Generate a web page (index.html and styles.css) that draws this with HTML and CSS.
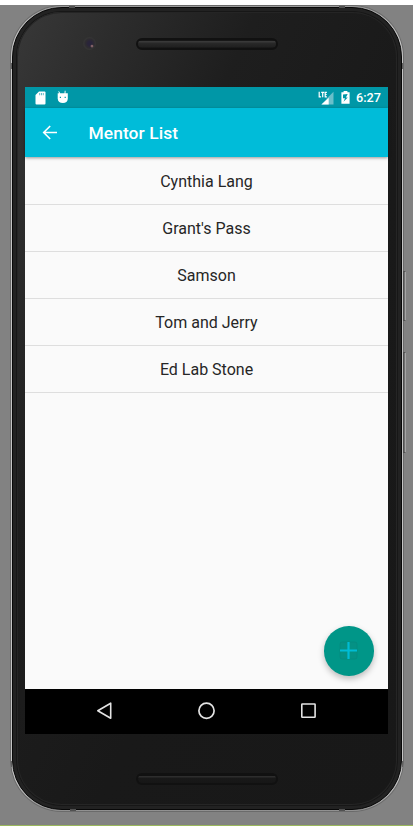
FILE: index.html
```html
<!DOCTYPE html>
<html lang="en">
<head>
<meta charset="utf-8">
<title>Mentor List</title>
<link rel="stylesheet" href="styles.css">
</head>
<body>
<div class="stage">
  <div class="phone">
    <i class="key power"></i><i class="key volume"></i>
    <i class="mark top-left"></i><i class="mark top-right"></i><i class="mark bottom-left"></i><i class="mark bottom-right"></i>
    <i class="side-mark left-top"></i><i class="side-mark right-top"></i><i class="side-mark left-bottom"></i><i class="side-mark right-bottom"></i>
    <div class="body">
      <div class="face">
        <div class="bezel top"><i class="camera"></i><i class="speaker"></i></div>
        <main class="screen">
          <div class="status">
            <div class="status-group left">
              <svg width="11" height="14" viewBox="0 0 11 14"><path fill="#fff" fill-rule="evenodd" d="M4 .5h5.500q1 0 1 1v11q0 1-1 1h-8q-1 0-1-1V4z"/><path fill="#63bcc6" d="M4.200 2v2.200h1V2zM6 2v2.200h1V2zM7.800 2v2.200h1V2z"/></svg>
              <svg class="droid" width="12" height="14" viewBox="0 0 12 14"><path fill="#fff" fill-rule="evenodd" d="M2 1.300 3.200 3.300h4.300L7.700.7l.9.100-.1 2.500h2.300v5.400q-.4 4.300-4.900 4.400-4.700-.1-5.200-4.400V3.300h1.500L1.200 1.500zM2.800 6.800v1.200H4V6.800zM7.600 6.800v1.200h1.200V6.800z"/></svg>
            </div>
            <div class="status-group">
              <svg width="16" height="14" viewBox="0 0 16 14"><path fill="#69bfca" d="M15.500.8v12.700H3.200l5.300-5.300V7.800z"/><path fill="#fff" d="M10.700 6.800v6.700H3.500z"/><path fill="none" stroke="#fff" stroke-width="1.200" d="M1.200.8v5h1.900M3.200 1.300h3M4.700 1v5.300M8.900 1.300H7.200v4.500h1.700M7.200 3.500h1.500"/></svg>
              <svg class="battery" width="9" height="13" viewBox="0 0 9 13"><path fill="#fff" d="M2.600 0h3.800v1.200h2.200v11.500H.4V1.200h2.200z"/><path fill="#0097a7" d="M6.700 3 2 3.500v3.800h2L2.500 10.800l4.300-4.400H4.900z"/></svg>
              <span class="clock">6:27</span>
            </div>
          </div>
          <header class="appbar">
            <svg width="16" height="16" viewBox="0 0 16 16"><path fill="none" stroke="#fff" stroke-width="1.600" d="M15 7.500H2M8.200 1 1.700 7.500l6.500 6.500"/></svg>
            <h1>Mentor List</h1>
          </header>
          <ul class="list">
            <li>Cynthia Lang</li>
            <li>Grant's Pass</li>
            <li>Samson</li>
            <li>Tom and Jerry</li>
            <li>Ed Lab Stone</li>
          </ul>
          <button class="fab" aria-label="Add"><svg width="19" height="19" viewBox="0 0 19 19"><rect x="1" y="1" width="17" height="17" rx="2" fill="#059184" stroke="#058a7e" stroke-width=".7"/><path fill="none" stroke="#00bcd4" stroke-width="2.200" d="M9.500 1v17M1 9.500h17"/></svg></button>
          <nav class="nav">
            <svg width="18" height="18" viewBox="0 0 18 18"><path fill="none" stroke="#e3e3e3" stroke-width="1.600" stroke-linejoin="round" d="M14.700 1.200v15L1.800 8.700z"/></svg>
            <svg width="18" height="18" viewBox="0 0 18 18"><circle cx="8.500" cy="8.700" r="7.600" fill="none" stroke="#e3e3e3" stroke-width="1.700"/></svg>
            <svg width="18" height="18" viewBox="0 0 18 18"><rect x="1.800" y="2" width="13.300" height="13.300" rx=".5" fill="none" stroke="#e3e3e3" stroke-width="1.600"/></svg>
          </nav>
        </main>
        <div class="bezel bottom"><i class="speaker"></i></div>
      </div>
    </div>
  </div>
</div>
</body>
</html>
```
FILE: styles.css
```css
* { box-sizing: border-box; }
body { display: flow-root; margin: 0; background: #fff; font-family: Roboto, sans-serif; }
svg { display: block; flex: none; }

.stage {
  height: 821px;
  margin-top: 5px;
  padding: 1px 10px 0 11px;
  background: #828282;
  border-bottom: 1px solid #9ab75c;
}

.phone {
  position: relative;
  height: 805px;
  padding: 1px;
  border-radius: 51px;
  background: linear-gradient(#999, #c4c4c4 4%, #c4c4c4 96%, #909090);
  box-shadow: 0 0 0 1px #6a6a6a;
}
.body {
  height: 803px;
  padding: 4px;
  border-radius: 50px;
  background: #222;
  border: 1px solid #080808;
}
.face {
  height: 793px;
  display: flex;
  flex-direction: column;
  border-radius: 45px;
  background: linear-gradient(115deg, #383838, #2c2c2c 14%, #1e1e1e 32%, #191919 60%, #181818);
  box-shadow: 0 0 0 1px #171717, inset 0 0 0 1px #252525;
}
.bezel { display: flex; justify-content: center; }
.bezel.top { position: relative; height: 75px; padding: 26px 1px 0 0; }
.bezel.bottom { flex: 1; padding: 39px 1px 0 0; }
.speaker {
  width: 142px;
  height: 12px;
  border-radius: 6px;
  border: 2px solid #111;
  background: linear-gradient(#181818 1px, #393939 1px 2px, #292929 3px, #202020 7px, #131313);
}
.bottom .speaker { background: linear-gradient(#111 1px, #2d2d2d 1px 2px, #191919 3px, #161616); }
.camera {
  position: absolute;
  left: 66px;
  top: 25px;
  width: 13px;
  height: 13px;
  border-radius: 50%;
  background: radial-gradient(circle at 69% 70%, #806065 0 .8px, transparent 1.800px), radial-gradient(circle at 52% 50%, #29243a 0 2px, #2e2c30 4.500px, #353535 6px);
}

.mark { position: absolute; width: 6px; height: 2px; background: #505050; }
.top-left { left: 58px; top: 0; }
.top-right { left: 328px; top: 0; }
.bottom-left { left: 59px; bottom: 0; }
.bottom-right { left: 328px; bottom: 0; }
.side-mark { position: absolute; width: 1px; height: 6px; background: #606060; }
.left-top { left: 0; top: 57px; }
.right-top { right: 0; top: 57px; }
.left-bottom { left: 0; bottom: 44px; }
.right-bottom { right: 0; bottom: 44px; }
.key {
  position: absolute;
  right: -3px;
  width: 3px;
  border: solid #505050;
  border-width: 1px 0 1px 1px;
  border-right: 1px solid #a5a5a5;
  background: #707070;
  border-radius: 0 1px 1px 0;
}
.power { top: 265px; height: 50px; }
.volume { top: 346px; height: 101px; }

.screen {
  position: relative;
  display: flex;
  flex-direction: column;
  width: 363px;
  height: 647px;
  margin-left: 8px;
  background: #fafafa;
}
.status {
  display: flex;
  align-items: center;
  justify-content: space-between;
  height: 21px;
  padding: 0 7px 0 10px;
  background: #0097a7;
}
.status-group { display: flex; align-items: center; }
.status-group.left { gap: 10.500px; }
.droid { margin-bottom: 1px; }
.battery { margin-left: 7px; }
.clock { margin-left: 6px; color: #fff; font-size: 12.700px; font-weight: 500; line-height: 21px; }
.appbar {
  display: flex;
  align-items: center;
  height: 49px;
  padding: 0 17px;
  background: #00bcd9;
  box-shadow: 0 1px 3px rgba(0, 0, 0, .4);
}
.appbar h1 {
  margin: 1px 0 0 30.500px;
  color: #fff;
  font-size: 17.400px;
  font-weight: 500;
  line-height: 24px;
  letter-spacing: .08px;
}
.list { flex: 1; margin: 0; padding: 1px 0 0; list-style: none; }
.list li {
  height: 47px;
  border-bottom: 1px solid #dedede;
  color: #262626;
  font-size: 16px;
  line-height: 48px;
  text-align: center;
}
.fab {
  position: absolute;
  right: 14.500px;
  bottom: 58.500px;
  width: 49.500px;
  height: 49.500px;
  padding: 0;
  display: grid;
  place-items: center;
  border: 0;
  border-radius: 50%;
  background: #009688;
  box-shadow: 0 3px 6px rgba(0, 0, 0, .25);
}
.nav {
  display: flex;
  align-items: center;
  justify-content: center;
  gap: 84px;
  height: 45px;
  padding: 0 0 2px;
  background: #000;
}
```
